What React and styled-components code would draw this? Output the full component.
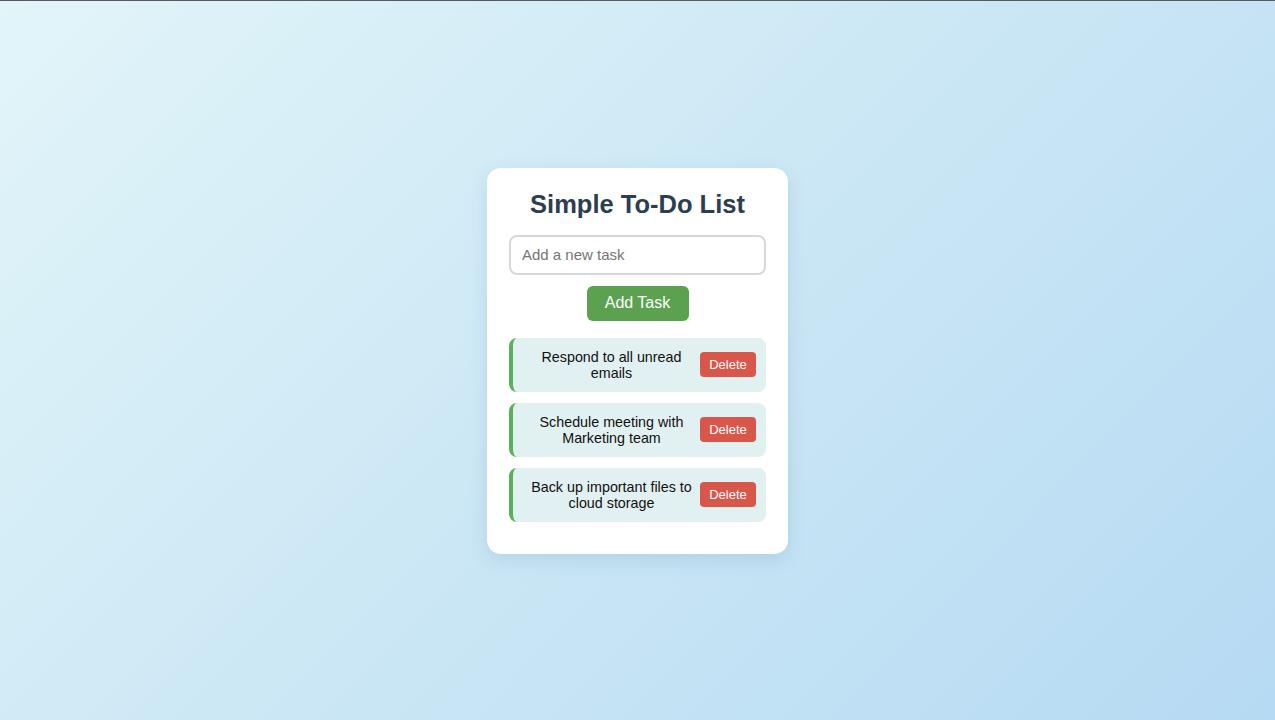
import React, { useState } from "react";
import styled, { createGlobalStyle } from "styled-components";

const GlobalStyle = createGlobalStyle`
  html, body {
    margin: 0;
    padding: 0;
  }
  body {
    font-family: "Liberation Sans", Arial, sans-serif;
    border-top: 1px solid #5a5a5a;
  }
`;

const Page = styled.div`
  min-height: 719px;
  display: flex;
  align-items: center;
  justify-content: center;
  background: linear-gradient(135deg, #e2f5f9 0%, #cbe7f5 50%, #b6daf3 100%);
`;

const Card = styled.div`
  width: 257px;
  padding: 21px 22px 20px;
  background: #fff;
  border-radius: 14px;
  box-shadow: 0 6px 18px rgba(80, 130, 170, 0.18);
`;

const Title = styled.h1`
  margin: 0 0 16px;
  text-align: center;
  font-size: 25.5px;
  line-height: 30px;
  font-weight: bold;
  color: #2c3e50;
`;

const Input = styled.input`
  display: block;
  box-sizing: border-box;
  width: 100%;
  height: 40px;
  padding: 0 11px;
  border: 2px solid #d5d9de;
  border-radius: 8px;
  font-family: inherit;
  font-size: 15px;
  color: #333;
  outline: none;

  ::placeholder {
    color: #7a7a7a;
  }
`;

const AddButton = styled.button`
  display: block;
  margin: 11px auto 17px;
  width: 102px;
  height: 35px;
  border: none;
  border-radius: 6px;
  background: #5ba150;
  color: #fff;
  font-family: inherit;
  font-size: 16px;
  cursor: pointer;
`;

const List = styled.ul`
  list-style: none;
  margin: 0;
  padding: 0;
  display: flex;
  flex-direction: column;
  gap: 11px;
  padding-bottom: 12px;
`;

const Item = styled.li`
  display: flex;
  align-items: center;
  min-height: 54px;
  box-sizing: border-box;
  padding: 6px 10px 6px 10px;
  background: #e1f0f0;
  border-left: 4px solid #5cb05a;
  border-radius: 8px;
`;

const Text = styled.span`
  flex: 1;
  text-align: center;
  font-size: 14.3px;
  line-height: 16px;
  color: #111;
`;

const DeleteButton = styled.button`
  flex: none;
  width: 56px;
  height: 25px;
  border: none;
  border-radius: 4px;
  background: #d9574a;
  color: #fff;
  font-family: inherit;
  font-size: 13px;
  cursor: pointer;
`;

export default function App() {
  const [tasks, setTasks] = useState([
    { id: 1, text: "Respond to all unread emails" },
    { id: 2, text: "Schedule meeting with Marketing team" },
    { id: 3, text: "Back up important files to cloud storage" },
  ]);
  const [value, setValue] = useState("");

  const addTask = () => {
    if (!value.trim()) return;
    setTasks([...tasks, { id: Date.now(), text: value.trim() }]);
    setValue("");
  };

  return (
    <>
      <GlobalStyle />
      <Page>
        <Card>
          <Title>Simple To-Do List</Title>
          <Input
            placeholder="Add a new task"
            value={value}
            onChange={(e) => setValue(e.target.value)}
          />
          <AddButton onClick={addTask}>Add Task</AddButton>
          <List>
            {tasks.map((task) => (
              <Item key={task.id}>
                <Text>{task.text}</Text>
                <DeleteButton
                  onClick={() => setTasks(tasks.filter((t) => t.id !== task.id))}
                >
                  Delete
                </DeleteButton>
              </Item>
            ))}
          </List>
        </Card>
      </Page>
    </>
  );
}
